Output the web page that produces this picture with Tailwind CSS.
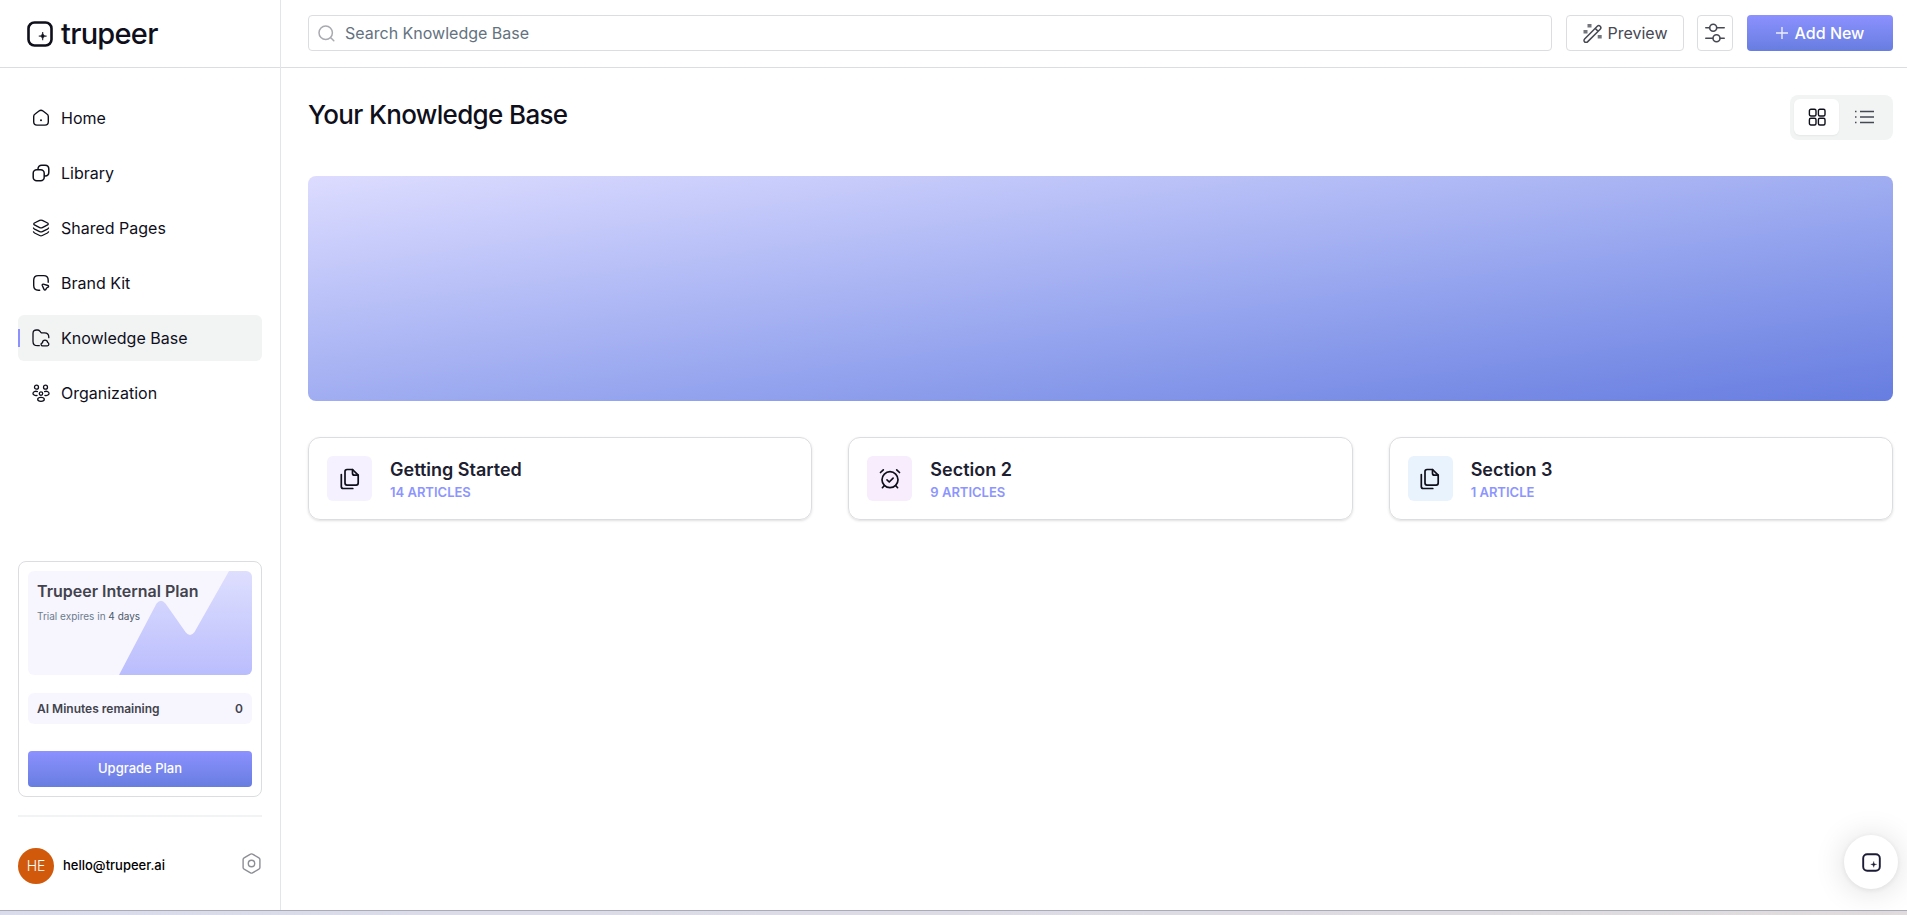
<!DOCTYPE html>
<html lang="en">
<head>
<meta charset="utf-8">
<meta name="viewport" content="width=device-width, initial-scale=1">
<title>Trupeer – Knowledge Base</title>
<script src="https://cdn.jsdelivr.net/npm/@tailwindcss/browser@4"></script>
</head>
<body class="flex h-screen flex-col bg-white font-['Inter',sans-serif] text-[#0f0f1c]">
<div class="flex min-h-0 flex-1">

  <aside class="flex w-[281px] shrink-0 flex-col border-r border-[#e4e5e8]">
    <a href="#" class="flex h-[68px] shrink-0 items-center gap-2 border-b border-[#dcdde0] pl-[27px]" aria-label="trupeer home">
      <svg class="size-[26px]" viewBox="0 0 26 26" fill="none"><rect x="1.5" y="1.5" width="23" height="23" rx="6" stroke="#0f0f1c" stroke-width="2.6"/><path d="M15.700 11c.4 3.100 1 3.700 3.900 4.100-2.900.4-3.500 1-3.900 4.100-.4-3.100-1-3.700-3.900-4.100 2.900-.4 3.500-1 3.900-4.100z" fill="#0f0f1c" stroke="#0f0f1c" stroke-width=".6"/></svg>
      <span class="text-[29px] leading-8 font-medium tracking-tight">trupeer</span>
    </a>

    <nav class="flex flex-col gap-[9px] px-[18px] pt-[27px] text-base leading-5">
      <a href="#" class="flex h-[46px] items-center gap-[11px] rounded-md pl-[14px]">
        <svg class="size-[18px]" viewBox="0 0 18 18" fill="none" stroke="currentColor" stroke-width="1.4"><path d="M1.700 7.600c0-1.100.5-2 1.400-2.600l3.900-3c1.200-.9 2.800-.9 4 0l3.900 3c.9.600 1.400 1.500 1.400 2.600v5.200c0 1.900-1.400 3.300-3.300 3.300H5c-1.900 0-3.300-1.400-3.300-3.300z"/><circle cx="9" cy="11.300" r="1" fill="currentColor" stroke="none"/></svg>
        Home</a>
      <a href="#" class="flex h-[46px] items-center gap-[11px] rounded-md pl-[14px]">
        <svg class="size-[18px]" viewBox="0 0 18 18" fill="none" stroke="currentColor" stroke-width="1.5"><rect x="1.200" y="5.800" width="11" height="11" rx="3.500"/><path d="M6 5.600V5c0-2.200 1.500-3.800 3.700-3.800h3.400c2.200 0 3.700 1.600 3.700 3.800v3.200c0 2.200-1.500 3.700-3.700 3.700h-.7"/></svg>
        Library</a>
      <a href="#" class="flex h-[46px] items-center gap-[11px] rounded-md pl-[14px]">
        <svg class="size-[18px]" viewBox="0 0 18 18" fill="none" stroke="currentColor" stroke-width="1.300" stroke-linecap="round" stroke-linejoin="round"><path d="M7.700 1.400c.8-.4 1.800-.4 2.600 0l5.300 2.600c.8.400.8 1.500 0 1.900l-5.300 2.700c-.8.400-1.800.4-2.600 0L2.400 5.900c-.8-.4-.8-1.500 0-1.900z"/><path d="M1.500 9c.2.500.6.800 1.100 1.100l5.100 2.500c.8.400 1.800.4 2.600 0l5.100-2.500c.5-.3.900-.6 1.100-1.100"/><path d="M1.500 12.800c.2.500.6.900 1.100 1.200l5.100 2.500c.8.400 1.800.4 2.600 0l5.100-2.500c.5-.3.900-.7 1.100-1.200"/></svg>
        Shared Pages</a>
      <a href="#" class="flex h-[46px] items-center gap-[11px] rounded-md pl-[14px]">
        <svg class="size-[18px]" viewBox="0 0 18 18" fill="none" stroke="currentColor" stroke-width="1.400" stroke-linecap="round" stroke-linejoin="round"><path d="M7.700 16.200H6.300c-2.900 0-4.600-1.700-4.600-4.600V6.200c0-2.900 1.700-4.600 4.600-4.600h5.300c2.900 0 4.600 1.700 4.600 4.600v2"/><path d="M10.200 10.700c-.2-.7.400-1.300 1.100-1.100l4.600 1.300c.8.300.9 1.300.2 1.700l-1.500.8-.9 1.600c-.4.700-1.500.6-1.700-.2l-1.800-4.100z" transform="translate(0 .6)"/></svg>
        Brand Kit</a>
      <a href="#" aria-current="page" class="relative flex h-[46px] items-center gap-[11px] rounded-md bg-[#f2f4f4] pl-[14px]">
        <span class="absolute top-[14px] left-0 h-[18px] w-[2px] bg-[#8c91ff]"></span>
        <svg class="size-[18px]" viewBox="0 0 18 18" fill="none" stroke="currentColor" stroke-width="1.300" stroke-linecap="round" stroke-linejoin="round"><path d="M7.300 16.700H5.500c-3 0-4.500-1.200-4.500-4.300V4.600C1 2 2.200 1 4.600 1h.9c1.100 0 1.700.4 2.400 1.200l.8 1c.5.500.9.700 1.600.7h2.200c3 0 4.300 1.300 4.300 4.200v.6"/><path d="M10.500 16.800c-1.300 0-1.900-1.500-1-2.500.2-.3.600-.5.900-.5.200-1.700 1.300-2.700 2.600-2.700s2.400.8 2.600 2.200c1.700.5 1.700 3.400-.2 3.500z"/></svg>
        Knowledge Base</a>
      <a href="#" class="flex h-[46px] items-center gap-[11px] rounded-md pl-[14px]">
        <svg class="size-[18px]" viewBox="0 0 18 18" fill="none" stroke="currentColor" stroke-width="1.300" stroke-linecap="round"><circle cx="4.500" cy="3.200" r="2"/><circle cx="13.500" cy="3.200" r="2"/><circle cx="9" cy="9.600" r="1.700"/><ellipse cx="9" cy="15.300" rx="3.300" ry="2"/><path d="M5.400 7.600c-.9-.4-2.300-.4-3.300.2-1.500.9-1.500 2.300 0 3.200.9.600 2 .7 3 .4M12.600 7.600c.9-.4 2.300-.4 3.300.2 1.500.9 1.500 2.300 0 3.200-.9.600-2 .7-3 .4"/></svg>
        Organization</a>
    </nav>

    <div class="mt-auto px-[18px]">
      <section class="rounded-lg border border-[#dcdde0] p-[9px]">
        <div class="relative h-[104px] overflow-hidden rounded-md bg-[#f7f6ff]">
          <svg class="absolute right-0 bottom-0 h-[104px] w-[133px]" viewBox="0 0 133 104"><defs><linearGradient id="hill" x1="0" y1="0" x2="0" y2="1"><stop offset="0" stop-color="#dedffe"/><stop offset="1" stop-color="#babdfd"/></linearGradient></defs><path d="M0 104 37.500 32.500Q42 27 46.500 32.500L66.500 61Q71 67 75.500 61L110 0H133V104Z" fill="url(#hill)"/></svg>
          <div class="relative px-[9px] pt-2">
            <h2 class="text-base leading-6 font-semibold text-[#42434d]">Trupeer Internal Plan</h2>
            <p class="mt-[5px] text-[10px] leading-4 text-[#6b7c8c]">Trial expires in <span class="text-[#4d5a68]">4 days</span></p>
          </div>
        </div>
        <div class="mt-[18px] flex h-[31px] items-center justify-between rounded-md bg-[#f7f6ff] px-[9px] text-xs font-semibold text-[#42434d]"><span>AI Minutes remaining</span><span>0</span></div>
        <button type="button" class="mt-[27px] h-9 w-full rounded bg-linear-to-b from-[#8c91ff] to-[#677de0] text-[13px] font-medium text-white">Upgrade Plan</button>
      </section>
      <div class="mt-[18px] h-[2px] bg-[#f2f3f4]"></div>
      <div class="flex items-center pt-[31px] pb-[26px]">
        <span class="flex size-9 items-center justify-center rounded-full bg-[#d1590b] text-sm font-light text-white">HE</span>
        <span class="ml-[9px] text-[13px] font-medium text-black">hello@trupeer.ai</span>
        <button type="button" class="mb-[5px] ml-auto" aria-label="Settings">
          <svg class="size-[21px]" viewBox="0 0 21 21" fill="none" stroke="#8d8e95" stroke-width="1.400" stroke-linejoin="round"><path d="M9.500 1.200c.6-.4 1.400-.4 2 0l6.400 3.600c.7.400 1 .9 1 1.700v8c0 .8-.3 1.300-1 1.700l-6.400 3.600c-.6.400-1.400.4-2 0l-6.400-3.600c-.7-.4-1-.9-1-1.700v-8c0-.8.3-1.300 1-1.700z"/><circle cx="10.500" cy="10.500" r="3.200"/></svg>
        </button>
      </div>
    </div>
  </aside>

  <div class="flex min-w-0 flex-1 flex-col">
    <header class="flex h-[68px] shrink-0 items-start gap-[14px] border-b border-[#dcdde0] pt-[15px] pr-[14px] pl-[27px]">
      <label class="flex h-9 flex-1 items-center gap-[10px] rounded border border-[#dcdde0] pl-[9px]">
        <svg class="size-[17px]" viewBox="0 0 17 17" fill="none" stroke="#a9aaaf" stroke-width="1.500" stroke-linecap="round"><circle cx="7.700" cy="7.700" r="6.700"/><path d="m12.800 12.800 3 3"/></svg>
        <input type="text" aria-label="Search Knowledge Base" placeholder="Search Knowledge Base" class="h-full flex-1 bg-transparent text-base outline-none placeholder:text-[#637280]">
      </label>
      <button type="button" class="flex h-9 w-[118px] items-center justify-center gap-1.5 rounded border border-[#dcdde0] text-base text-[#464853]">
        <svg class="size-[19px]" viewBox="0 0 19 19" fill="none" stroke="currentColor" stroke-width="1.500" stroke-linejoin="round"><path d="M1.600 17.900c-.8-.8-.8-2.100 0-2.900L14.300 2.300c.8-.8 2.100-.8 2.900 0s.8 2.100 0 2.900L4.500 17.900c-.8.800-2.100.8-2.900 0zM12.200 4.400l2.900 2.900"/><g fill="currentColor" stroke="none" opacity=".75"><path d="M4.500 0h4v3.500h-4zM.5 6h4v3.500h-4zM14.700 11h4v3.500h-4z"/></g></svg>
        Preview
      </button>
      <button type="button" aria-label="Filters" class="-ml-px flex size-9 items-center justify-center rounded border border-[#dcdde0] text-[#464853]">
        <svg class="size-[20px]" viewBox="0 0 20 20" fill="none" stroke="currentColor" stroke-width="1.600" stroke-linecap="round"><path d="M.800 4.700h3.600M11.800 4.700h7.400M.800 15.200h6.800M15.200 15.200h4"/><circle cx="8.200" cy="4.700" r="3.500"/><circle cx="11.500" cy="15.200" r="3.500"/></svg>
      </button>
      <button type="button" class="flex h-9 w-[146px] items-center justify-center gap-[7px] rounded bg-linear-to-b from-[#8c91ff] to-[#677de0] text-base font-medium text-white">
        <svg class="size-[12px]" viewBox="0 0 12 12" stroke="#fff" stroke-width="1.400" stroke-opacity=".85"><path d="M6 0v12M0 6h12"/></svg>
        Add New
      </button>
    </header>

    <main class="flex-1 pt-[27px] pr-[14px] pl-[27px]">
      <div class="flex items-start justify-between">
        <h1 class="text-[26px] leading-10 font-medium tracking-tight">Your Knowledge Base</h1>
        <div class="flex rounded-lg bg-[#f2f4f4] px-1 pt-1 pb-[5px]">
          <button type="button" aria-label="Grid view" aria-pressed="true" class="flex h-9 w-[45px] items-center justify-center rounded-md bg-white shadow-xs">
            <svg class="size-[18px]" viewBox="0 0 18 18" fill="none" stroke="currentColor" stroke-width="1.400"><rect x="1.400" y="1.200" width="6.600" height="6.800" rx="1.500"/><rect x="10.400" y="1.200" width="6.600" height="6.800" rx="1.500"/><rect x="1.400" y="10.200" width="6.600" height="6.800" rx="1.500"/><rect x="10.400" y="10.200" width="6.600" height="6.800" rx="1.500"/></svg>
          </button>
          <button type="button" aria-label="List view" aria-pressed="false" class="flex h-9 w-[50px] items-center justify-center text-[#464853]">
            <svg class="size-[20px]" viewBox="0 0 20 20" fill="none" stroke="currentColor" stroke-width="1.400"><path d="M6 4.500h14M6 10h14M6 15.500h14M1 4.500h1.500M1 10h1.500M1 15.500h1.500"/></svg>
          </button>
        </div>
      </div>

      <div class="mt-9 h-[225px] rounded-lg bg-linear-to-br from-[#dddcff] to-[#677de0]"></div>

      <div class="mt-9 grid grid-cols-3 gap-9">
        <a href="#" class="flex items-center gap-[18px] rounded-xl border border-[#dcdde0] p-[18px] shadow-sm">
          <span class="flex size-[45px] items-center justify-center rounded-md bg-[#f5f1fe]">
            <svg class="size-[22px]" viewBox="0 0 22 22" fill="none" stroke="currentColor" stroke-width="1.700" stroke-linecap="round" stroke-linejoin="round"><path d="M13.500 1.500H8a2 2 0 0 0-2 2v11.600a2 2 0 0 0 2 2h9.200a2 2 0 0 0 2-2V7.200z"/><path d="M13.500 1.500v3.700a2 2 0 0 0 2 2h3.700"/><path d="M2.300 6.500v12a2 2 0 0 0 2 2h9.500"/></svg>
          </span>
          <span>
            <span class="block text-lg leading-[26px] font-semibold text-[#1c2030]">Getting Started</span>
            <span class="block text-[13px] leading-[18px] font-semibold text-[#8c95ff]">14 ARTICLES</span>
          </span>
        </a>
        <a href="#" class="flex items-center gap-[18px] rounded-xl border border-[#dcdde0] p-[18px] shadow-sm">
          <span class="flex size-[45px] items-center justify-center rounded-md bg-[#f7edfd]">
            <svg class="size-[22px]" viewBox="0 0 22 22" fill="none" stroke="currentColor" stroke-width="1.700" stroke-linecap="round" stroke-linejoin="round"><circle cx="11" cy="11.700" r="8"/><path d="m8 11.900 2.200 2.100 3.900-3.900M4.300 1.900 1.500 4.500M17.700 1.900l2.800 2.600M5.400 17.500l-2 2.200M16.600 17.500l2 2.200"/></svg>
          </span>
          <span>
            <span class="block text-lg leading-[26px] font-semibold text-[#1c2030]">Section 2</span>
            <span class="block text-[13px] leading-[18px] font-semibold text-[#8c95ff]">9 ARTICLES</span>
          </span>
        </a>
        <a href="#" class="flex items-center gap-[18px] rounded-xl border border-[#dcdde0] p-[18px] shadow-sm">
          <span class="flex size-[45px] items-center justify-center rounded-md bg-[#e9f3fe]">
            <svg class="size-[22px]" viewBox="0 0 22 22" fill="none" stroke="currentColor" stroke-width="1.700" stroke-linecap="round" stroke-linejoin="round"><path d="M13.500 1.500H8a2 2 0 0 0-2 2v11.600a2 2 0 0 0 2 2h9.200a2 2 0 0 0 2-2V7.200z"/><path d="M13.500 1.500v3.700a2 2 0 0 0 2 2h3.700"/><path d="M2.300 6.500v12a2 2 0 0 0 2 2h9.500"/></svg>
          </span>
          <span>
            <span class="block text-lg leading-[26px] font-semibold text-[#1c2030]">Section 3</span>
            <span class="block text-[13px] leading-[18px] font-semibold text-[#8c95ff]">1 ARTICLE</span>
          </span>
        </a>
      </div>
    </main>
  </div>
</div>

<footer class="h-[5px] shrink-0 border-t border-[#a9abb8] bg-linear-to-r from-[#dadcec] to-[#e0dcdd]"></footer>

<button type="button" aria-label="Open assistant" class="fixed right-[9px] bottom-[26px] flex size-[54px] items-center justify-center rounded-full bg-white shadow-[0_1px_6px_rgba(0,0,0,0.08),0_2px_32px_rgba(0,0,0,0.14)]">
  <svg class="size-[19px]" viewBox="0 0 19 19" fill="none"><rect x="1.200" y="1.200" width="16.600" height="16.600" rx="4" stroke="#1b1b36" stroke-width="1.900"/><path d="M11.700 8.500c.2 2.200.7 2.700 2.900 2.900-2.200.2-2.700.7-2.900 2.900-.2-2.200-.7-2.700-2.900-2.900 2.200-.2 2.700-.7 2.900-2.900z" fill="#1b1b36" stroke="#1b1b36" stroke-width=".4"/></svg>
</button>
</body>
</html>
